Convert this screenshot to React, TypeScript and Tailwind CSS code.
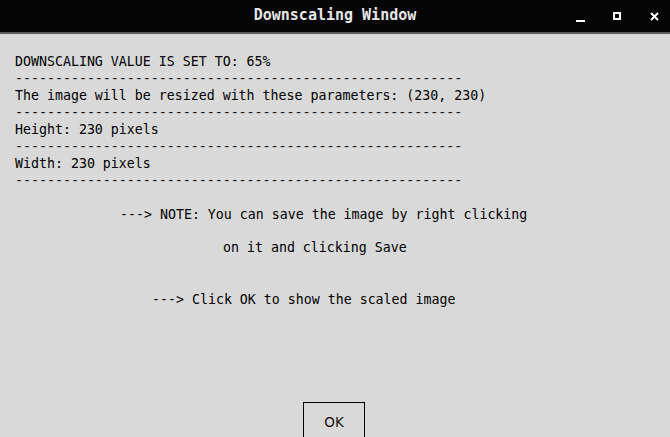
import React from "react";

const mono = { fontFamily: '"DejaVu Sans Mono", monospace' };

export default function App() {
  const dash = "-".repeat(56);
  return (
    <div className="w-[670px] h-[437px] overflow-hidden bg-[#d9d9d9] flex flex-col" style={mono}>
      <div className="h-[32px] bg-[#050505] relative flex items-center justify-center shrink-0">
        <span className="text-[15px] font-bold text-[#e8e8e8] leading-none mb-[2px]">Downscaling Window</span>
        <div className="absolute right-0 top-0 h-full flex items-center">
          <div className="w-[9px] h-[2px] bg-white mt-[10px] mr-[28px]" />
          <div className="w-[8px] h-[8px] border-2 border-white mr-[29px]" />
          <svg width="9" height="9" viewBox="0 0 9 9" className="mr-[11px]">
            <path d="M1 1 L8 8 M8 1 L1 8" stroke="#fff" strokeWidth="2" />
          </svg>
        </div>
      </div>
      <div className="h-[2px] bg-[#5a5a5a] shrink-0" />
      <div className="flex flex-col pl-[15px] pt-[19px] text-[13.28px] text-black leading-[17px]">
        <div>DOWNSCALING VALUE IS SET TO: 65%</div>
        <div>{dash}</div>
        <div>The image will be resized with these parameters: (230, 230)</div>
        <div>{dash}</div>
        <div>Height: 230 pixels</div>
        <div>{dash}</div>
        <div>Width: 230 pixels</div>
        <div>{dash}</div>
      </div>
      <div className="flex flex-col text-[13.28px] text-black leading-[17px] pt-[17px]">
        <div className="pl-[120px]">---&gt; NOTE: You can save the image by right clicking</div>
        <div className="pl-[223px] mt-[16px]">on it and clicking Save</div>
        <div className="pl-[152px] mt-[35px]">---&gt; Click OK to show the scaled image</div>
      </div>
      <div className="flex-1" />
      <div className="flex justify-start pl-[303px]">
        <div
          className="w-[62px] h-[35px] border border-black border-b-0 flex items-start justify-center pt-[9px] text-[13.5px] text-[#111]"
          style={{ fontFamily: '"DejaVu Sans", sans-serif' }}
        >
          OK
        </div>
      </div>
    </div>
  );
}
